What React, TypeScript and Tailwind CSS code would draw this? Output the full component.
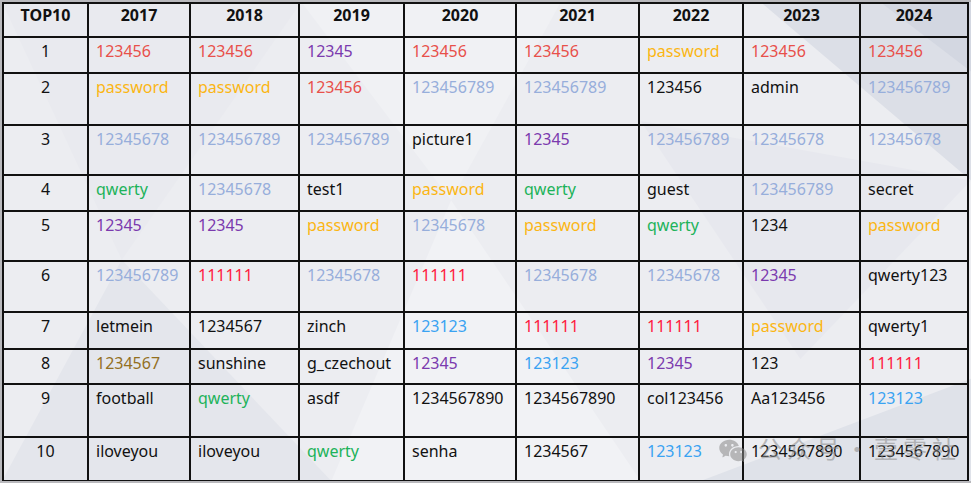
import { RiWechatFill } from "react-icons/ri";

type Cell = [string, string];

const R = "text-[#e8504a]";
const Y = "text-[#fbb614]";
const P = "text-[#7b3aae]";
const LB = "text-[#97aedb]";
const G = "text-[#1db35a]";
const PR = "text-[#ff1a40]";
const B = "text-[#3aa3f2]";
const BR = "text-[#93701f]";
const K = "text-[#111111]";

const years = ["2017", "2018", "2019", "2020", "2021", "2022", "2023", "2024"];
const widths = ["w-[85px]", "w-[102px]", "w-[109px]", "w-[105px]", "w-[112px]", "w-[123px]", "w-[104px]", "w-[117px]", "w-[108px]"];
const heights = ["h-[36px]", "h-[52px]", "h-[50px]", "h-[36px]", "h-[50px]", "h-[51px]", "h-[37px]", "h-[35px]", "h-[53px]", "h-[44px]"];

const rows: Cell[][] = [
  [["123456", R], ["123456", R], ["12345", P], ["123456", R], ["123456", R], ["password", Y], ["123456", R], ["123456", R]],
  [["password", Y], ["password", Y], ["123456", R], ["123456789", LB], ["123456789", LB], ["123456", K], ["admin", K], ["123456789", LB]],
  [["12345678", LB], ["123456789", LB], ["123456789", LB], ["picture1", K], ["12345", P], ["123456789", LB], ["12345678", LB], ["12345678", LB]],
  [["qwerty", G], ["12345678", LB], ["test1", K], ["password", Y], ["qwerty", G], ["guest", K], ["123456789", LB], ["secret", K]],
  [["12345", P], ["12345", P], ["password", Y], ["12345678", LB], ["password", Y], ["qwerty", G], ["1234", K], ["password", Y]],
  [["123456789", LB], ["111111", PR], ["12345678", LB], ["111111", PR], ["12345678", LB], ["12345678", LB], ["12345", P], ["qwerty123", K]],
  [["letmein", K], ["1234567", K], ["zinch", K], ["123123", B], ["111111", PR], ["111111", PR], ["password", Y], ["qwerty1", K]],
  [["1234567", BR], ["sunshine", K], ["g_czechout", K], ["12345", P], ["123123", B], ["12345", P], ["123", K], ["111111", PR]],
  [["football", K], ["qwerty", G], ["asdf", K], ["1234567890", K], ["1234567890", K], ["col123456", K], ["Aa123456", K], ["123123", B]],
  [["iloveyou", K], ["iloveyou", K], ["qwerty", G], ["senha", K], ["1234567", K], ["123123", B], ["1234567890", K], ["1234567890", K]],
];

function Backdrop() {
  return (
    <svg className="absolute inset-0 w-full h-full" viewBox="0 0 971 483" preserveAspectRatio="none">
      <rect width="971" height="483" fill="#ecedf1" />
      <polygon points="0,0 300,0 120,260" fill="#e9eaef" />
      <polygon points="120,260 0,483 330,483" fill="#e4e6ec" />
      <polygon points="300,0 560,0 450,200" fill="#f0f1f4" />
      <polygon points="450,200 640,483 330,483" fill="#f1f2f5" />
      <polygon points="760,0 971,0 971,180" fill="#dcdfe7" />
      <polygon points="880,0 971,0 971,70" fill="#d3d7e1" />
      <polygon points="640,120 971,180 800,360" fill="#e7e8ee" />
      <polygon points="700,483 971,483 971,380" fill="#dfe2e9" />
    </svg>
  );
}

export default function App() {
  return (
    <div className="w-[971px] h-[483px] bg-[#b9b9bd] pl-[2px] pt-[2px] overflow-hidden" style={{ fontFamily: '"Noto Sans", "Noto Sans CJK SC", sans-serif' }}>
      <div className="relative w-[969px] h-[479px] overflow-hidden">
        <Backdrop />
        <table className="relative table-fixed border-collapse text-[16px] leading-[22px]">
          <colgroup>
            {widths.map((w, i) => (
              <col key={i} className={w} />
            ))}
          </colgroup>
          <thead>
            <tr className="h-[34px]">
              <th className="border-2 border-[#111] align-top pt-0 font-bold text-[#111]">TOP10</th>
              {years.map((y) => (
                <th key={y} className="border-2 border-[#111] align-top pt-0 font-bold text-[#111]">
                  {y}
                </th>
              ))}
            </tr>
          </thead>
          <tbody>
            {rows.map((row, i) => (
              <tr key={i} className={heights[i]}>
                <td className="border-2 border-[#111] align-top pt-[2px] text-center text-[#111]">{i + 1}</td>
                {row.map(([text, color], j) => (
                  <td key={j} className={`border-2 border-[#111] align-top pt-[2px] pl-[7px] whitespace-nowrap ${color}`}>
                    {text}
                  </td>
                ))}
              </tr>
            ))}
          </tbody>
        </table>

        {/* watermark */}
        <div className="absolute left-[716px] top-[428px] flex items-center gap-[10px] whitespace-nowrap text-[#8a8a8a] opacity-55">
          <RiWechatFill className="w-[30px] h-[30px] mt-[6px]" />
          <span className="text-[24px] leading-[30px] tracking-[5px]" style={{ fontFamily: '"Noto Sans CJK SC", sans-serif' }}>
            公众号·壹零社
          </span>
        </div>
      </div>
    </div>
  );
}
